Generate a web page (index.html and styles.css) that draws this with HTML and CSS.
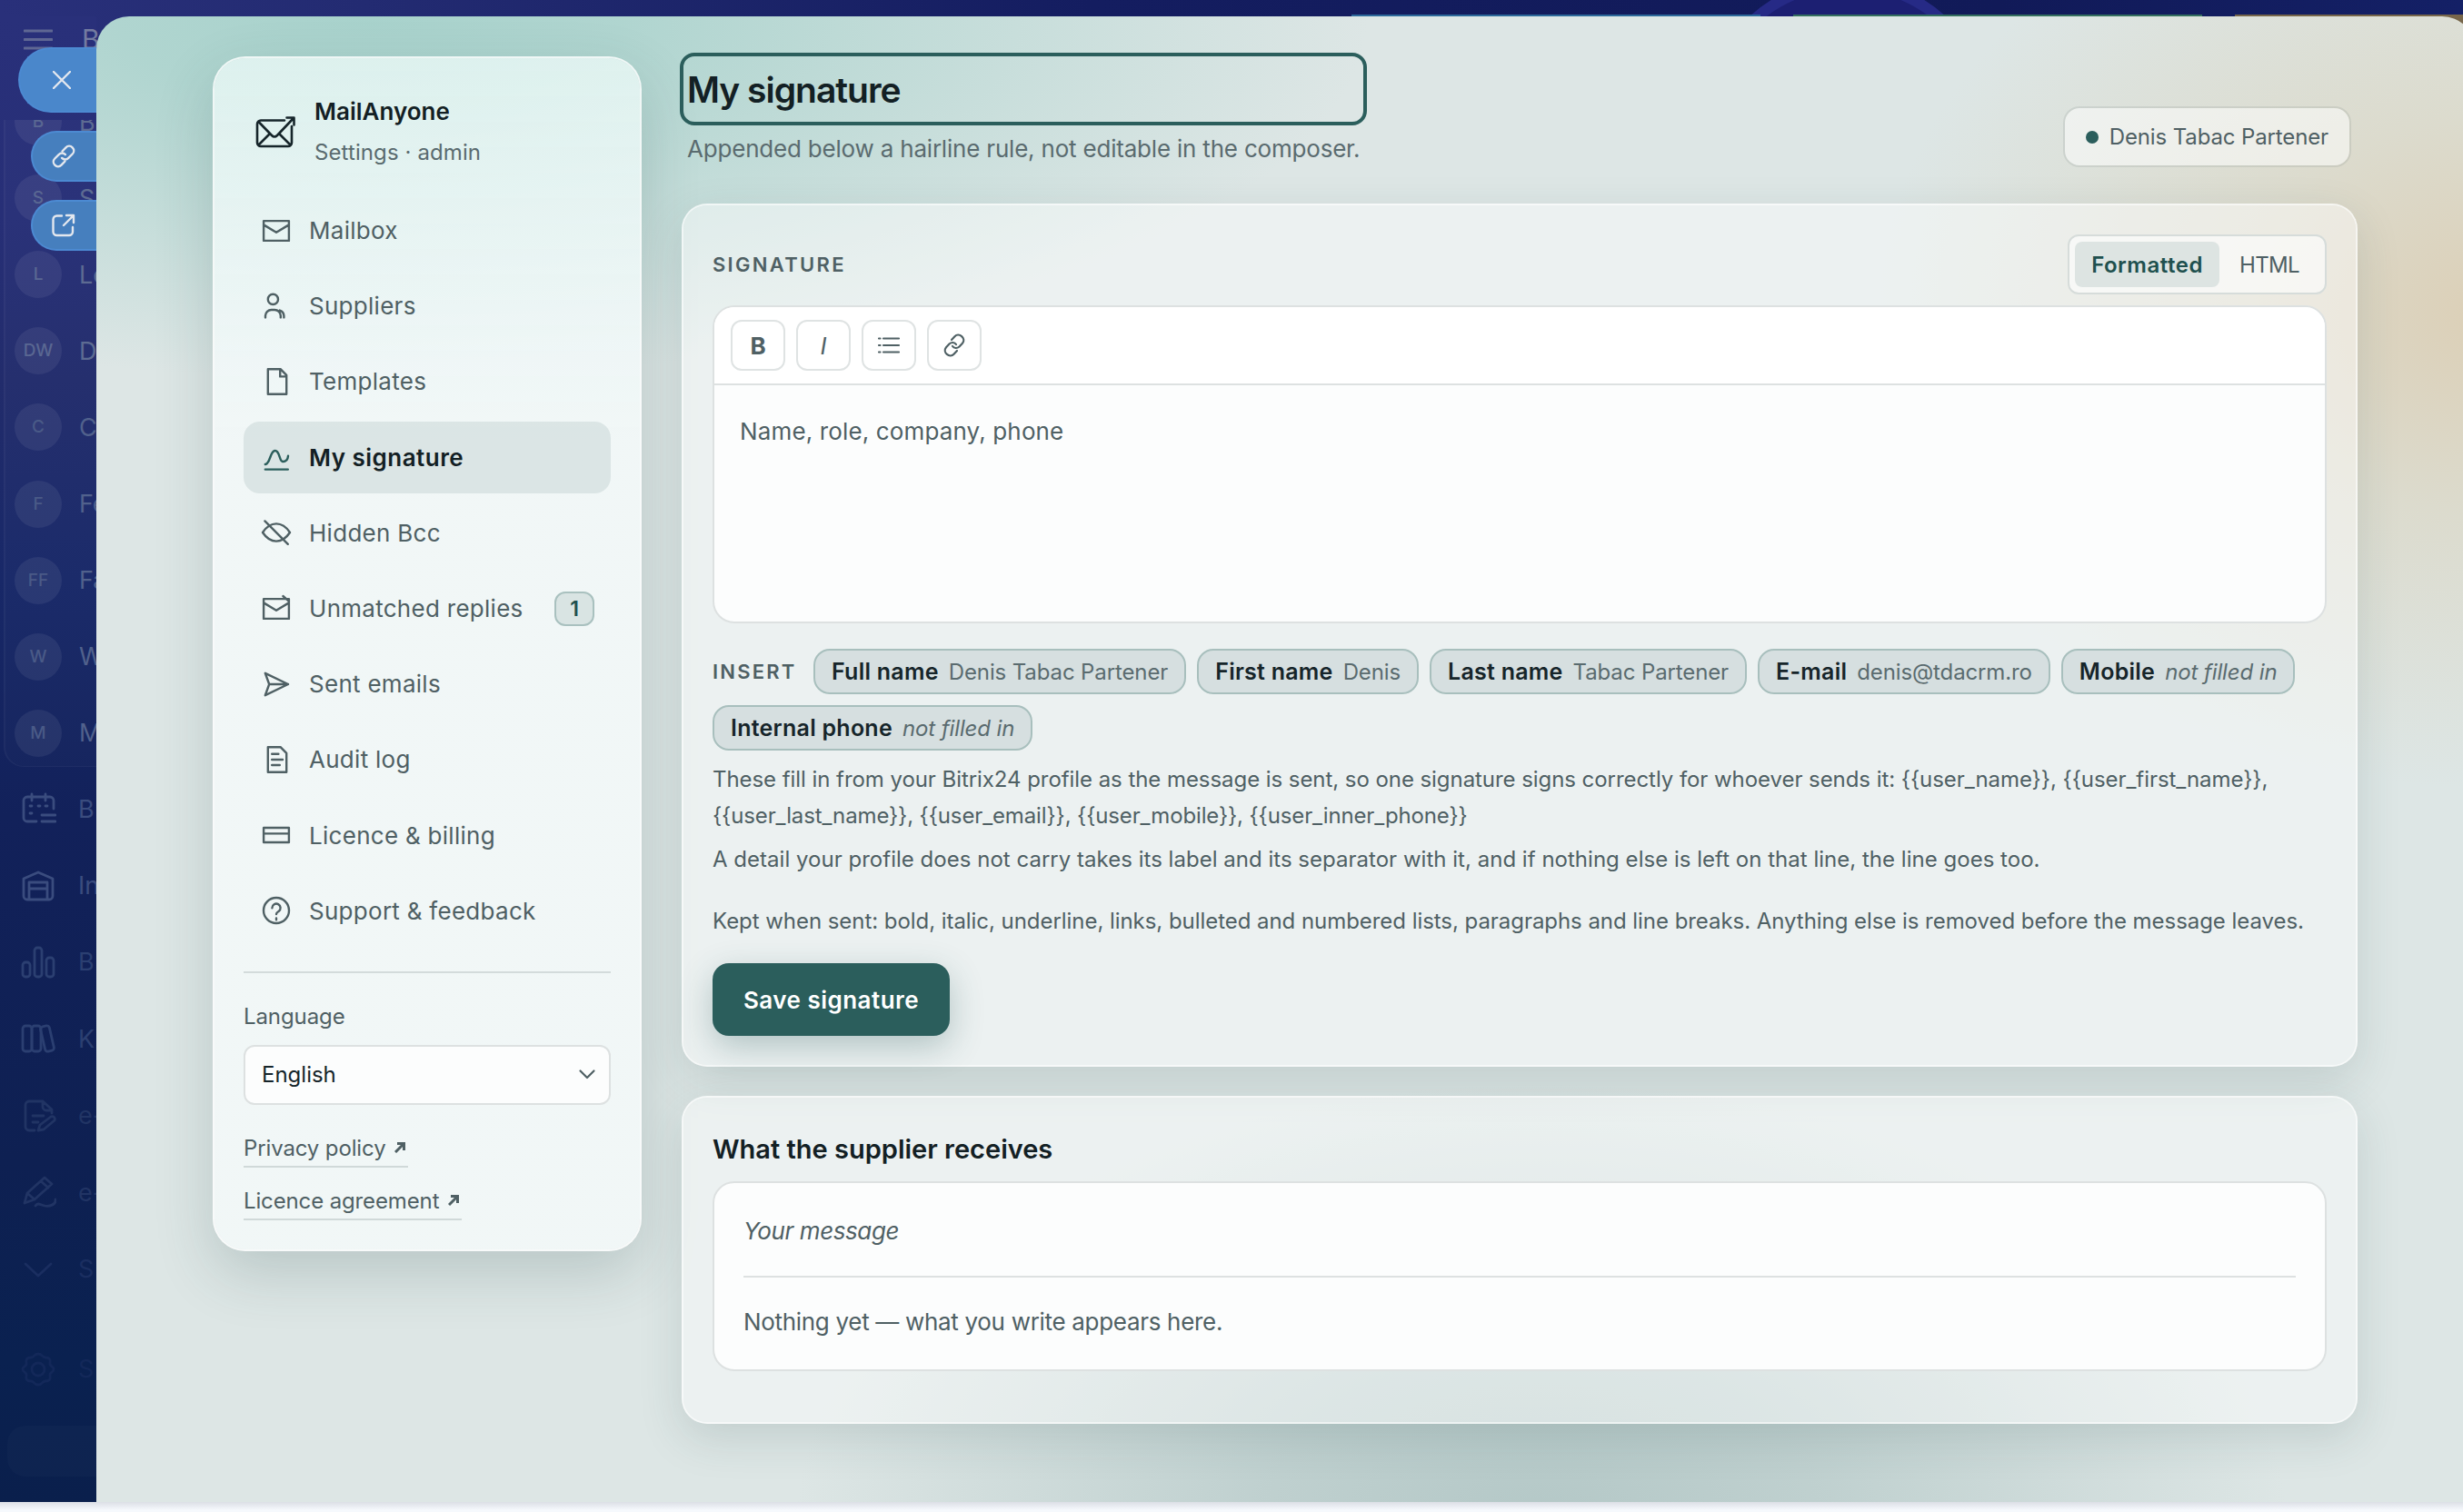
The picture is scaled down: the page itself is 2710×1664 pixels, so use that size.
FILE: index.html
```html
<!DOCTYPE html>
<html lang="en">

<head>
    <meta charset="utf-8">
    <title>MailAnyone - My signature</title>
    <link rel="stylesheet" href="styles.css">
</head>

<body>
    <div class="topbar">
        <div class="ring"></div>
        <span class="tile tile-blue"></span>
        <span class="tile tile-green"></span>
        <span class="tile tile-orange"></span>
    </div>

    <div class="workspace">
        <!-- portal menu, dimmed behind the slider -->
        <div class="rail">
            <div class="rail-head">
                <svg width="32" height="24" viewBox="0 0 32 24"><path d="M1 3h30M1 12.500h30M1 22h30"/></svg>
                <span>B</span>
            </div>
            <div class="rail-group">
                <div class="rail-row"><b>B</b><span>B</span></div>
                <div class="rail-row"><b>S</b><span>S</span></div>
                <div class="rail-row"><b>L</b><span>Le</span></div>
                <div class="rail-row"><b>DW</b><span>D</span></div>
                <div class="rail-row"><b>C</b><span>C</span></div>
                <div class="rail-row"><b>F</b><span>Fe</span></div>
                <div class="rail-row"><b>FF</b><span>Fa</span></div>
                <div class="rail-row"><b>W</b><span>W</span></div>
                <div class="rail-row"><b>M</b><span>M</span></div>
            </div>
            <div class="rail-row icon-row">
                <svg width="40" height="40" viewBox="0 0 40 40"><path d="M18 34H8a4 4 0 0 1-4-4V11a4 4 0 0 1 4-4h25a4 4 0 0 1 4 4v9M13 4v7M28 4v7M24 27h15M24 34h15M11 17h2M20 17h2M28 17h2M11 25h2"/></svg>
                <span>B</span>
            </div>
            <div class="rail-row icon-row">
                <svg width="40" height="40" viewBox="0 0 40 40"><path d="M4 12l16-7 16 7v19a4 4 0 0 1-4 4H8a4 4 0 0 1-4-4zM10 35V16h20v19M10 23h20"/></svg>
                <span>In</span>
            </div>
            <div class="rail-row icon-row">
                <svg width="40" height="40" viewBox="0 0 40 40"><rect x="3" y="20" width="8" height="16" rx="3"/><rect x="16" y="4" width="8" height="32" rx="3"/><rect x="29" y="15" width="8" height="21" rx="3"/></svg>
                <span>B</span>
            </div>
            <div class="rail-row icon-row">
                <svg width="40" height="40" viewBox="0 0 40 40"><rect x="3" y="6" width="10" height="28" rx="3"/><rect x="13" y="6" width="10" height="28" rx="3"/><rect x="25" y="6" width="10" height="28" rx="3" transform="rotate(-13 30 20)"/></svg>
                <span>K</span>
            </div>
            <div class="rail-row icon-row">
                <svg width="40" height="40" viewBox="0 0 40 40"><path d="M16 36H10a4 4 0 0 1-4-4V8a4 4 0 0 1 4-4h15l10 9v4M25 4v6a4 4 0 0 0 4 4h6M14 20h12M14 27h6M20 36l2-6 12-9a3 3 0 0 1 4 4l-12 10z"/></svg>
                <span>e-</span>
            </div>
            <div class="rail-row icon-row">
                <svg width="40" height="40" viewBox="0 0 40 40"><path d="M5 32l3-11L27 4l8 7-19 17zM23 8l8 7M9 22l7 6M5 32l11-4M17 35c3-4 5-1 10 0s13-1 12-7"/></svg>
                <span>e-</span>
            </div>
            <div class="rail-row icon-row">
                <svg width="40" height="40" viewBox="0 0 40 40"><path d="M6 14l14 13 14-13"/></svg>
                <span>S</span>
            </div>
            <div class="rail-row icon-row rail-settings">
                <svg width="40" height="40" viewBox="0 0 40 40"><circle cx="20" cy="20" r="7"/><path d="M20 3c5 0 4 4 8 4s6 2 5 6 4 3 4 7-5 3-4 7-1 6-5 6-3 4-8 4-4-4-8-4-6-2-5-6-4-3-4-7 5-3 4-7 1-6 5-6 3-4 8-4z"/></svg>
                <span>S</span>
            </div>
            <div class="rail-invite"></div>

            <div class="label label-close">
                <svg width="20" height="20" viewBox="0 0 20 20"><path d="M1 1l18 18M19 1L1 19"/></svg>
            </div>
            <div class="label label-link">
                <svg width="28" height="28" viewBox="0 0 28 28"><path d="M12.500 8.500l4-4.200a5 5 0 0 1 7.200 7.200l-4.400 4.400a5 5 0 0 1-7.200 0M15.500 19.500l-4 4.200a5 5 0 0 1-7.200-7.200l4.400-4.400a5 5 0 0 1 7.200 0"/></svg>
            </div>
            <div class="label label-open">
                <svg width="28" height="28" viewBox="0 0 28 28"><path d="M12 3.500H6.500a4 4 0 0 0-4 4V21a4 4 0 0 0 4 4H20a4 4 0 0 0 4-4v-5M17 3h8v8M25 3L14 14"/></svg>
            </div>
        </div>

        <div class="panel">
            <aside class="sidebar">
                <div class="brand">
                    <svg width="44" height="36" viewBox="0 0 44 36"><path d="M32 5.500H6a4 4 0 0 0-4 4V30a4 4 0 0 0 4 4h30a4 4 0 0 0 4-4V12M3.500 7l14.500 15c2 2 4 2 6 0L42 3M3.500 32.500L16 20M26 20l12.500 12.500M34.500 2.500h8v8"/></svg>
                    <div>
                        <div class="brand-name">MailAnyone</div>
                        <div class="brand-sub">Settings · admin</div>
                    </div>
                </div>

                <nav class="nav">
                    <a class="nav-item"><svg viewBox="0 0 18 18"><path d="M2.050 3.550h13.900v10.900H2.050zM2.050 5.700L9 9.900l6.950-4.200"/></svg>Mailbox</a>
                    <a class="nav-item"><svg viewBox="0 0 18 18"><circle cx="7.200" cy="5.200" r="2.800"/><path d="M3 15.200v-1a3.300 3.300 0 0 1 3.300-3.200h1.800a3.300 3.300 0 0 1 3.300 3.200v1M10.900 11.300a3.400 3.400 0 0 1 2.300 3v.900"/></svg>Suppliers</a>
                    <a class="nav-item"><svg viewBox="0 0 18 18"><path d="M4.400 2.100h6.900l3.300 3.300v10.500H4.400zM11.100 2.100v4.100h3.500"/></svg>Templates</a>
                    <a class="nav-item active"><svg viewBox="0 0 18 18"><path d="M2.900 13c2.800 0 2.600-7.500 5.400-7.500s2.200 6 4.300 6c1.600 0 2.700-.8 2.900-3.100M2.900 15.800h12.500"/></svg>My signature</a>
                    <a class="nav-item"><svg viewBox="0 0 18 18"><path d="M1.500 9q3.200-4.800 7.500-4.800T16.500 9q-3.200 4.800-7.500 4.800T1.500 9zM2.700 2.700l12.700 12.700"/></svg>Hidden Bcc</a>
                    <a class="nav-item"><svg viewBox="0 0 18 18"><path d="M2.050 3.550h13.900v10.900H2.050zM2.050 5.700L9 9.900l6.950-4.200M12.700 2l3.200 2.800"/></svg>Unmatched replies<span class="count">1</span></a>
                    <a class="nav-item"><svg viewBox="0 0 18 18"><path d="M2.900 2.900L15.500 9 2.900 15.100 5.100 9zM5.100 9h10.400"/></svg>Sent emails</a>
                    <a class="nav-item"><svg viewBox="0 0 18 18"><path d="M4.400 2.100h6.900l3.300 3.300v10.500H4.400zM6.600 5.900h3.600M6.600 9h5.900M6.600 12h4.300"/></svg>Audit log</a>
                    <a class="nav-item"><svg viewBox="0 0 18 18"><path d="M2.050 5h13.900v8H2.050zM2.050 8.200h13.900"/></svg>Licence &amp; billing</a>
                    <a class="nav-item"><svg viewBox="0 0 18 18"><circle cx="9" cy="9" r="7"/><path d="M6.700 7.600a2.300 2.300 0 1 1 3.600 1.900c-.8.500-1.300.8-1.300 1.500M9 13.200v.9"/></svg>Support &amp; feedback</a>
                </nav>

                <div class="side-foot">
                    <div class="side-label">Language</div>
                    <div class="select">English
                        <svg width="20" height="14" viewBox="0 0 20 14"><path d="M2.500 2.500L10 10l7.500-7.500"/></svg>
                    </div>
                    <a class="legal">Privacy policy <svg width="12" height="12" viewBox="0 0 12 12"><path d="M1 11l9-9M3 1.500h7.500V9"/></svg></a>
                    <a class="legal">Licence agreement <svg width="12" height="12" viewBox="0 0 12 12"><path d="M1 11l9-9M3 1.500h7.500V9"/></svg></a>
                </div>
            </aside>

            <main class="main">
                <header class="head">
                    <div class="head-text">
                        <h1>My signature</h1>
                        <p>Appended below a hairline rule, not editable in the composer.</p>
                    </div>
                    <div class="user"><i></i>Denis Tabac Partener</div>
                </header>

                <section class="card">
                    <div class="card-top">
                        <span class="caption">SIGNATURE</span>
                        <div class="toggle">
                            <span class="on">Formatted</span>
                            <span>HTML</span>
                        </div>
                    </div>

                    <div class="editor">
                        <div class="toolbar">
                            <button class="bold">B</button>
                            <button class="ital">I</button>
                            <button><svg width="28" height="28" viewBox="0 0 28 28"><path d="M8 6.500h17M8 14h17M8 21.500h17M3 6.500h1.500M3 14h1.500M3 21.500h1.500"/></svg></button>
                            <button><svg width="28" height="28" viewBox="0 0 28 28"><path d="M11 8l3.500-3.800c4.500-4.700 13 2 8.500 7.600l-3.500 3.700c-2.300 2.200-5.800 2-7.500-.5M17 20l-3.500 3.800c-4.500 4.700-13-2-8.500-7.600l3.500-3.700c2.300-2.200 5.800-2 7.500.5"/></svg></button>
                        </div>
                        <div class="area">Name, role, company, phone</div>
                    </div>

                    <div class="chips">
                        <span class="caption">INSERT</span>
                        <span class="chip"><b>Full name</b>Denis Tabac Partener</span>
                        <span class="chip"><b>First name</b>Denis</span>
                        <span class="chip"><b>Last name</b>Tabac Partener</span>
                        <span class="chip"><b>E-mail</b>denis@tdacrm.ro</span>
                        <span class="chip"><b>Mobile</b><em>not filled in</em></span>
                        <span class="chip"><b>Internal phone</b><em>not filled in</em></span>
                    </div>

                    <p class="help">These fill in from your Bitrix24 profile as the message is sent, so one signature signs correctly for whoever sends it: {{user_name}}, {{user_first_name}},<br><span class="tokens">{{user_last_name}}, {{user_email}}, {{user_mobile}}, {{user_inner_phone}}</span></p>
                    <p class="help help-detail">A detail your profile does not carry takes its label and its separator with it, and if nothing else is left on that line, the line goes too.</p>
                    <p class="help help-kept">Kept when sent: bold, italic, underline, links, bulleted and numbered lists, paragraphs and line breaks. Anything else is removed before the message leaves.</p>

                    <button class="save">Save signature</button>
                </section>

                <section class="card">
                    <h2>What the supplier receives</h2>
                    <div class="preview">
                        <p><em>Your message</em></p>
                        <hr>
                        <p class="empty">Nothing yet — what you write appears here.</p>
                    </div>
                </section>
            </main>
        </div>
    </div>
</body>

</html>
```

FILE: styles.css
```css
* {
    box-sizing: border-box;
}

body {
    margin: 0;
    width: 2710px;
    height: 1664px;
    overflow: hidden;
    display: flex;
    flex-direction: column;
    font-family: Inter, "Liberation Sans", sans-serif;
    font-size: 24px;
    color: #4f6064;
    background: linear-gradient(#dcdfe6, #f6f9fd 9px) 0 1653px / 100% 11px no-repeat, #f6f9fd;
}

svg {
    fill: none;
    stroke: currentColor;
    stroke-linecap: round;
    stroke-linejoin: round;
    flex-shrink: 0;
}

h1, h2, p {
    margin: 0;
}

/* strip of the portal above the slider */
.topbar {
    position: relative;
    height: 18px;
    flex-shrink: 0;
    overflow: hidden;
    display: flex;
    align-items: flex-end;
    gap: 36px;
    padding-left: 1487px;
    background: linear-gradient(90deg, #29307a 0, #232b72 400px, #141d60 1200px, #111a58 2200px, #142066 2710px);
}

.tile {
    position: relative;
    width: 450px;
    height: 2px;
    flex-shrink: 0;
}

.tile-blue { background: #2d6a9b; }
.tile-green { background: #35705f; }
.tile-orange { background: #77664a; }

.ring {
    position: absolute;
    left: 1873px;
    top: -24px;
    width: 320px;
    height: 320px;
    border-radius: 50%;
    background: #1c1f72;
    border: 12px solid #262a86;
}

.workspace {
    display: flex;
    height: 1635px;
    background: linear-gradient(90deg, #29307a 0, #232b72 400px, #77664a 2600px);
}

/* left menu */
.rail {
    position: relative;
    width: 106px;
    flex-shrink: 0;
    padding-left: 4px;
    background: linear-gradient(#29307a 0, #272f77 220px, #222c6c 400px, #182868 620px, #12215a 880px, #0e2052 1260px, #0a2150 1480px, #0a1f4c 100%);
}

.rail-head {
    display: flex;
    align-items: center;
    gap: 32px;
    height: 114px;
    padding: 0 0 64px 22px;
    font-size: 30px;
    color: #737ba0;
    white-space: nowrap;
}

.rail-head svg {
    color: #5f6793;
    stroke-width: 3;
}

.rail-group {
    height: 712px;
    overflow: hidden;
    border-left: 2px solid rgba(255, 255, 255, .035);
    border-bottom: 1px solid rgba(255, 255, 255, .04);
    border-bottom-left-radius: 22px;
    background: rgba(255, 255, 255, .015);
}

.rail-group .rail-row:first-child {
    margin-top: -40px;
}

.rail-row {
    display: flex;
    align-items: center;
    gap: 19px;
    height: 84.100px;
    padding-left: 10px;
    font-size: 27px;
    color: #5d6b92;
    white-space: nowrap;
}

.rail-row b {
    width: 52px;
    height: 52px;
    flex-shrink: 0;
    border-radius: 50%;
    font-size: 19px;
    font-weight: 500;
    line-height: 52px;
    text-align: center;
    color: #5a6792;
    background: rgba(255, 255, 255, .065);
}

.rail-row:nth-child(n+5) { color: #51618c; }
.rail-row:nth-child(n+5) b { color: #4a5a87; }

.rail .icon-row {
    gap: 24px;
    padding-left: 18px;
    color: #3a4c7e;
    height: 84.400px;
}

.rail-group + .icon-row {
    margin-top: 4px;
}

.icon-row svg {
    stroke-width: 2.800;
}

.rail .icon-row:nth-child(n+5) { color: #2b3f71; }
.rail .icon-row:nth-child(n+7) { color: #213464; }
.rail .icon-row:nth-child(n+9) { color: #1a2e60; }

.rail .rail-settings:nth-child(n+9) {
    margin-top: 26px;
    color: #132859;
}

.rail-invite {
    height: 56px;
    margin: 20px 0 0 4px;
    border-radius: 20px 0 0 20px;
    background: rgba(255, 255, 255, .018);
}

/* slider buttons */
.label {
    position: absolute;
    right: 0;
    display: flex;
    align-items: center;
    color: #e3e7ee;
    background: #467fbe;
    border: 2px solid #4c8ad2;
    border-right: 0;
}

.label svg {
    stroke-width: 2.400;
}

.label-close {
    top: 34px;
    width: 86px;
    height: 72px;
    padding-left: 36px;
    border-radius: 36px 0 0 36px;
    background: #4a87cb;
}

.label-link,
.label-open {
    width: 72px;
    height: 56px;
    padding-left: 20px;
    border-radius: 28px 0 0 28px;
}

.label-link { top: 126px; }
.label-open { top: 202px; }

/* slider */
.panel {
    position: relative;
    width: 2617px;
    flex-shrink: 0;
    display: flex;
    align-items: flex-start;
    gap: 44px;
    padding: 44px 0 0 128px;
    border-radius: 36px 36px 0 0;
    background:
        radial-gradient(ellipse 1100px 400px at 300px 0, #a8d2cc 0, rgba(168, 210, 204, .85) 25%, rgba(168, 210, 204, 0) 100%),
        radial-gradient(ellipse 680px 520px at 2640px 330px, #dccfb6 0, rgba(219, 208, 182, .5) 42%, rgba(218, 214, 196, 0) 100%),
        radial-gradient(ellipse 820px 480px at 1590px 1655px, #b4c8c7 0, rgba(180, 200, 199, .72) 38%, rgba(180, 200, 199, 0) 100%),
        #dde6e5;
}

.sidebar {
    width: 472px;
    height: 1315px;
    flex-shrink: 0;
    padding: 32px;
    border: 2px solid rgba(255, 255, 255, .8);
    border-radius: 36px;
    background: linear-gradient(rgba(240, 252, 250, .72), rgba(246, 251, 252, .78) 420px);
    background-clip: padding-box;
    box-shadow: 0 24px 64px rgba(40, 75, 75, .2);
}

.brand {
    display: flex;
    align-items: center;
    gap: 21px;
    height: 97px;
    padding-left: 13px;
    color: #16252a;
}

.brand svg {
    stroke-width: 2.600;
}

.brand-name {
    font-size: 26px;
    font-weight: 600;
    line-height: 45px;
    letter-spacing: 0;
    color: #132024;
}

.brand-sub {
    line-height: 45px;
    color: #5a6b6f;
    letter-spacing: .100px;
}

.nav {
    display: flex;
    flex-direction: column;
    gap: 4px;
    margin-top: 21px;
}

.nav-item {
    display: flex;
    align-items: center;
    gap: 18px;
    height: 79.200px;
    padding: 0 18px;
    border-radius: 18px;
    font-size: 26px;
    letter-spacing: .280px;
}

.nav-item svg {
    width: 36px;
    height: 36px;
    stroke-width: 1.200;
}

.nav-item.active {
    font-weight: 600;
    letter-spacing: .480px;
    color: #132024;
    background: rgba(43, 94, 92, .11);
}

.nav-item.active svg {
    color: #2b5e5c;
}

.count {
    width: 44px;
    height: 38px;
    margin-left: auto;
    border: 2px solid #a9c1bf;
    border-radius: 12px;
    font-size: 23px;
    font-weight: 600;
    line-height: 34px;
    text-align: center;
    letter-spacing: 0;
    color: #20504e;
    background: #d9e4e3;
}

.side-foot {
    margin-top: 27px;
    border-top: 2px solid #d3dbdb;
    padding-top: 28px;
    display: flex;
    flex-direction: column;
    align-items: flex-start;
}

.side-label {
    line-height: 40px;
    letter-spacing: -.100px;
}

.select {
    display: flex;
    align-items: center;
    justify-content: space-between;
    width: 100%;
    height: 66px;
    margin: 11px 0 24px;
    padding: 0 14px 0 18px;
    border: 2px solid #dde1e1;
    border-radius: 12px;
    color: #16252a;
    background: #fcfdfd;
}

.select svg {
    color: #4f6064;
    stroke-width: 2.200;
}

.legal {
    height: 45px;
    margin-bottom: 13px;
    padding-right: 3px;
    border-bottom: 2px solid #d0d9d9;
    line-height: 47px;
    letter-spacing: -.130px;
}

.legal svg {
    margin-left: 3px;
    vertical-align: 3px;
    stroke-width: 3;
    stroke-linecap: butt;
    stroke-linejoin: miter;
}

.main {
    width: 1844px;
}

.head {
    display: flex;
    justify-content: space-between;
    align-items: flex-start;
    height: 162px;
    padding: 4px 7px 0 6px;
}

.head h1 {
    height: 64px;
    border-radius: 8px;
    outline: 4px solid #2b5e5c;
    outline-offset: 4px;
    font-size: 39px;
    font-weight: 600;
    line-height: 65px;
    letter-spacing: -1px;
    color: #132024;
}

.head p {
    margin-top: 13px;
    font-size: 26px;
    line-height: 41px;
    letter-spacing: -.200px;
    color: #5a6b6f;
}

.user {
    display: flex;
    align-items: center;
    gap: 12px;
    height: 67px;
    margin-top: 51px;
    padding: 0 23px 0 23px;
    border: 2px solid rgba(80, 100, 100, .12);
    border-radius: 18px;
    background: rgba(255, 255, 255, .52);
    background-clip: padding-box;
    letter-spacing: -.130px;
}

.user i {
    width: 14px;
    height: 14px;
    border-radius: 50%;
    background: #2b5e5c;
}

.card {
    padding: 32px;
    border: 2px solid rgba(255, 255, 255, .75);
    border-radius: 28px;
    background: rgba(255, 255, 255, .45);
    background-clip: padding-box;
    box-shadow: 0 16px 48px rgba(40, 75, 75, .15);
}

.card + .card {
    height: 361px;
    margin-top: 32px;
}

.card-top {
    display: flex;
    justify-content: space-between;
    align-items: center;
    height: 66px;
}

.caption {
    font-size: 22px;
    font-weight: 600;
    letter-spacing: 2.300px;
}

.toggle {
    display: flex;
    height: 66px;
    padding: 6px;
    border: 2px solid #d6dcda;
    border-radius: 12px;
    background: rgba(255, 255, 255, .6);
}

.toggle span {
    width: 110px;
    border-radius: 8px;
    line-height: 51px;
    text-align: center;
    letter-spacing: -.600px;
}

.toggle .on {
    width: 159px;
    font-weight: 600;
    letter-spacing: .500px;
    color: #20504e;
    background: #dde4e2;
}

.editor {
    height: 350px;
    margin-top: 12px;
    border: 2px solid #dde1e1;
    border-radius: 24px;
    background: #fcfdfd;
    overflow: hidden;
}

.toolbar {
    display: flex;
    gap: 12px;
    height: 86px;
    padding: 14px 18px;
    border-bottom: 2px solid #dde1e1;
    background: #fff;
}

.toolbar button {
    display: flex;
    align-items: center;
    justify-content: center;
    width: 60px;
    height: 56px;
    padding: 0;
    border: 2px solid #dfe3e3;
    border-radius: 12px;
    font-family: inherit;
    font-size: 26px;
    color: #4f6064;
    background: #fff;
}

.toolbar svg { stroke-width: 2.200; }
.toolbar .bold { font-weight: 700; }
.toolbar .ital { font-style: italic; }

.area {
    padding: 30px 28px;
    font-size: 26px;
    line-height: 42px;
    letter-spacing: .140px;
}

.chips {
    display: flex;
    flex-wrap: wrap;
    align-items: center;
    gap: 12px;
    margin-top: 28px;
}

.chips .caption {
    width: 99px;
    letter-spacing: 2.200px;
}

.chip {
    display: flex;
    align-items: center;
    gap: 11px;
    height: 50px;
    padding: 0 18px;
    border: 2px solid #a8bfbd;
    border-radius: 18px;
    letter-spacing: -.120px;
    background: #d6dfe0;
    color: #5a6b6f;
}

.chip b {
    font-size: 25px;
    font-weight: 600;
    letter-spacing: .250px;
    color: #16252a;
}

.help {
    margin-top: 12px;
    line-height: 39.500px;
    letter-spacing: -.060px;
    white-space: nowrap;
}

.help .tokens {
    letter-spacing: -.130px;
}

.help-detail {
    margin-top: 9px;
    letter-spacing: .020px;
}

.help-kept {
    margin-top: 28px;
    letter-spacing: -.050px;
}

.save {
    display: block;
    width: 261px;
    height: 80px;
    margin-top: 27px;
    padding: 0;
    border: 0;
    border-radius: 18px;
    font-family: inherit;
    font-size: 26px;
    font-weight: 600;
    letter-spacing: .480px;
    color: #fff;
    background: #2b5e5c;
    box-shadow: 0 12px 36px rgba(43, 94, 92, .3);
}

.card h2 {
    font-size: 29px;
    font-weight: 600;
    line-height: 50px;
    letter-spacing: 0;
    color: #132024;
}

.preview {
    height: 209px;
    margin-top: 10px;
    padding: 32px;
    border: 2px solid #dde1e1;
    border-radius: 24px;
    background: #fcfdfd;
}

.preview p {
    font-size: 26px;
    line-height: 42px;
    letter-spacing: -.400px;
}

.preview .empty {
    letter-spacing: -.310px;
}

.preview hr {
    height: 2px;
    margin: 28px 0;
    border: 0;
    background: #dde1e1;
}
```
